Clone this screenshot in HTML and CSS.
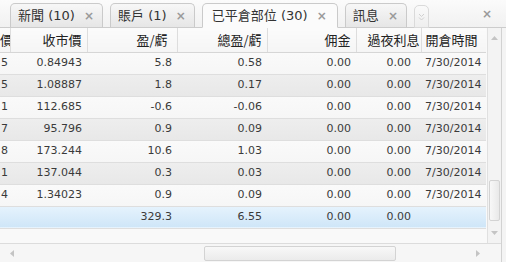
FILE: index.html
```html
<!DOCTYPE html>
<html lang="zh-Hant">
<head>
    <meta charset="UTF-8">
    <title>已平倉部位</title>
    <link rel="stylesheet" href="styles.css">
</head>
<body>
    <div class="panel">
        <div class="tabs">
            <div class="tab">新聞 (10) <span class="x">×</span></div>
            <div class="tab">賬戶 (1) <span class="x">×</span></div>
            <div class="tab active">已平倉部位 (30) <span class="x">×</span></div>
            <div class="tab">訊息 <span class="x">×</span></div>
            <div class="tab more">
                <svg width="7" height="8" viewBox="0 0 7 8"><path d="M1 1l2.5 2.5L6 1M1 4.5L3.5 7 6 4.5" fill="none" stroke="#d0d0d0" stroke-width="1"/></svg>
            </div>
            <span class="close">×</span>
        </div>

        <div class="content">
            <div class="main">
                <div class="grid">
                    <table>
                        <colgroup>
                            <col class="c0"><col class="c1"><col class="c2"><col class="c3">
                            <col class="c4"><col class="c5"><col class="c6">
                        </colgroup>
                        <thead>
                            <tr>
                                <th>價</th>
                                <th>收市價</th>
                                <th class="pl">盈/虧</th>
                                <th>總盈/虧</th>
                                <th>佣金</th>
                                <th class="swap">過夜利息</th>
                                <th class="date">開倉時間</th>
                            </tr>
                        </thead>
                        <tbody>
                            <tr><td>5</td><td>0.84943</td><td>5.8</td><td>0.58</td><td>0.00</td><td class="swap">0.00</td><td class="date">7/30/2014</td></tr>
                            <tr><td>5</td><td>1.08887</td><td>1.8</td><td>0.17</td><td>0.00</td><td class="swap">0.00</td><td class="date">7/30/2014</td></tr>
                            <tr><td>1</td><td>112.685</td><td>-0.6</td><td>-0.06</td><td>0.00</td><td class="swap">0.00</td><td class="date">7/30/2014</td></tr>
                            <tr><td>7</td><td>95.796</td><td>0.9</td><td>0.09</td><td>0.00</td><td class="swap">0.00</td><td class="date">7/30/2014</td></tr>
                            <tr><td>8</td><td>173.244</td><td>10.6</td><td>1.03</td><td>0.00</td><td class="swap">0.00</td><td class="date">7/30/2014</td></tr>
                            <tr><td>1</td><td>137.044</td><td>0.3</td><td>0.03</td><td>0.00</td><td class="swap">0.00</td><td class="date">7/30/2014</td></tr>
                            <tr><td>4</td><td>1.34023</td><td>0.9</td><td>0.09</td><td>0.00</td><td class="swap">0.00</td><td class="date">7/30/2014</td></tr>
                            <tr class="total"><td></td><td></td><td>329.3</td><td>6.55</td><td>0.00</td><td class="swap">0.00</td><td class="date"></td></tr>
                        </tbody>
                    </table>
                </div>
                <div class="hscroll">
                    <svg class="arrow" width="5" height="7" viewBox="0 0 5 7"><path d="M4 0v7L0 3.5z" fill="#c4c4c4"/></svg>
                    <div class="htrack"><div class="hthumb"></div></div>
                    <svg class="arrow" width="5" height="7" viewBox="0 0 5 7"><path d="M1 0v7l4-3.5z" fill="#c4c4c4"/></svg>
                </div>
            </div>
            <div class="vscroll">
                <div class="vtrack">
                    <svg class="arrow" width="7" height="5" viewBox="0 0 7 5"><path d="M0 4h7L3.5 0z" fill="#c4c4c4"/></svg>
                    <div class="vspace"><div class="vthumb"></div></div>
                    <svg class="arrow" width="7" height="5" viewBox="0 0 7 5"><path d="M0 1h7L3.5 5z" fill="#c4c4c4"/></svg>
                </div>
                <div class="corner"></div>
            </div>
            <div class="gutter"></div>
        </div>
    </div>
</body>
</html>
```

FILE: styles.css
```css
* {
    margin: 0;
    padding: 0;
    box-sizing: border-box;
}

body {
    font-family: 'DejaVu Sans', 'Noto Sans CJK TC', sans-serif;
    background: #f5f5f5;
    color: #333333;
}

.panel {
    width: 506px;
    height: 262px;
    display: flex;
    flex-direction: column;
    background: #f5f5f5;
}

/* tab strip */
.tabs {
    height: 28px;
    display: flex;
    align-items: flex-end;
    gap: 7px;
    padding-left: 10px;
    border-bottom: 1px solid #cccccc;
    background: linear-gradient(#fbfbfb, #f1f1f1);
}

.tab {
    height: 25px;
    margin-bottom: -1px;
    padding: 0 8px 0 7px;
    display: flex;
    align-items: center;
    gap: 5px;
    font-size: 13px;
    line-height: 16px;
    color: #333333;
    white-space: pre;
    border: 1px solid #cacaca;
    border-bottom: 1px solid #cccccc;
    border-radius: 5px 5px 0 0;
    background: linear-gradient(#f7f7f7, #e6e6e6);
}

.tab.active {
    padding: 0 10px 0 9px;
    background: #fbfbfb;
    border-bottom-color: #fbfbfb;
}

.tab .x {
    color: #9a9a9a;
    font-size: 12px;
    font-weight: bold;
}

.tab.more {
    width: 15px;
    height: 23px;
    padding: 0;
    justify-content: center;
    border-color: #dadada;
    background: linear-gradient(#fafafa, #eeeeee);
}

.close {
    margin-left: auto;
    margin-right: 14px;
    align-self: center;
    color: #9a9a9a;
    font-size: 12px;
    font-weight: bold;
}

/* grid area */
.content {
    flex: 1;
    display: flex;
}

.main {
    width: 487px;
    display: flex;
    flex-direction: column;
}

.grid {
    height: 215px;
    overflow: hidden;
    background: #f9f9f9;
}

table {
    width: 486px;
    border-collapse: collapse;
    table-layout: fixed;
}

.c0 { width: 10px; }
.c1 { width: 77px; }
.c2 { width: 90px; }
.c3 { width: 90px; }
.c4 { width: 89px; }
.c5 { width: 65px; }
.c6 { width: 65px; }

th {
    height: 24px;
    padding: 0 5px 0 0;
    text-align: right;
    font-family: 'Noto Sans CJK TC', sans-serif;
    font-weight: normal;
    font-size: 13px;
    line-height: 16px;
    color: #222222;
    white-space: nowrap;
    overflow: hidden;
    background: linear-gradient(#fbfbfb, #f5f5f5);
    border-bottom: 1px solid #d6d6d6;
    border-right: 1px solid #dddddd;
}

th:first-child {
    padding-right: 2px;
}

th.pl {
    padding-right: 9px;
}

th.swap {
    padding-right: 1px;
}

th.date {
    padding: 0 0 0 4px;
    text-align: left;
    border-right: none;
}

td {
    height: 22px;
    padding: 0 5px 0 0;
    text-align: right;
    font-size: 11px;
    line-height: 14px;
    color: #3a3a3a;
    white-space: nowrap;
    overflow: hidden;
    border-bottom: 1px solid #dedede;
}

td:first-child {
    padding-right: 2px;
}

td.swap {
    padding-right: 10px;
}

td.date {
    padding: 0 0 0 4px;
    text-align: left;
}

tbody tr:nth-child(odd) {
    background: linear-gradient(#fafafa, #f6f6f6);
}

tbody tr:nth-child(even) {
    background: linear-gradient(#eeeeee, #e8e8e8);
}

tbody tr.total {
    background: linear-gradient(#e6f3fd, #cfe6f8);
    border-bottom: 1px solid #b9d7ef;
}

/* scrollbars */
.hscroll {
    height: 19px;
    display: flex;
    align-items: center;
    padding: 0 7px 0 10px;
    gap: 6px;
    border-top: 1px solid #dcdcdc;
    background: #f6f6f6;
}

.htrack {
    flex: 1;
    height: 15px;
    padding-left: 183px;
    padding-right: 73px;
}

.hthumb {
    height: 100%;
    border: 1px solid #d3d3d3;
    border-radius: 2px;
    background: linear-gradient(#f8f8f8, #ebebeb);
}

.vscroll {
    width: 14px;
    display: flex;
    flex-direction: column;
}

.vtrack {
    height: 215px;
    display: flex;
    flex-direction: column;
    align-items: center;
    padding: 8px 0 8px;
    gap: 4px;
    background: #f3f3f3;
    border-left: 1px solid #e0e0e0;
}

.vspace {
    flex: 1;
    width: 100%;
    padding: 135px 1px 5px;
}

.vthumb {
    height: 100%;
    border: 1px solid #d3d3d3;
    border-radius: 2px;
    background: linear-gradient(90deg, #f8f8f8, #e9e9e9);
}

.corner {
    flex: 1;
    background: #f6f6f6;
    border-top: 1px solid #dcdcdc;
}

.gutter {
    flex: 1;
    border-left: 1px solid #d2d2d2;
    background: #f4f4f4;
}
```
